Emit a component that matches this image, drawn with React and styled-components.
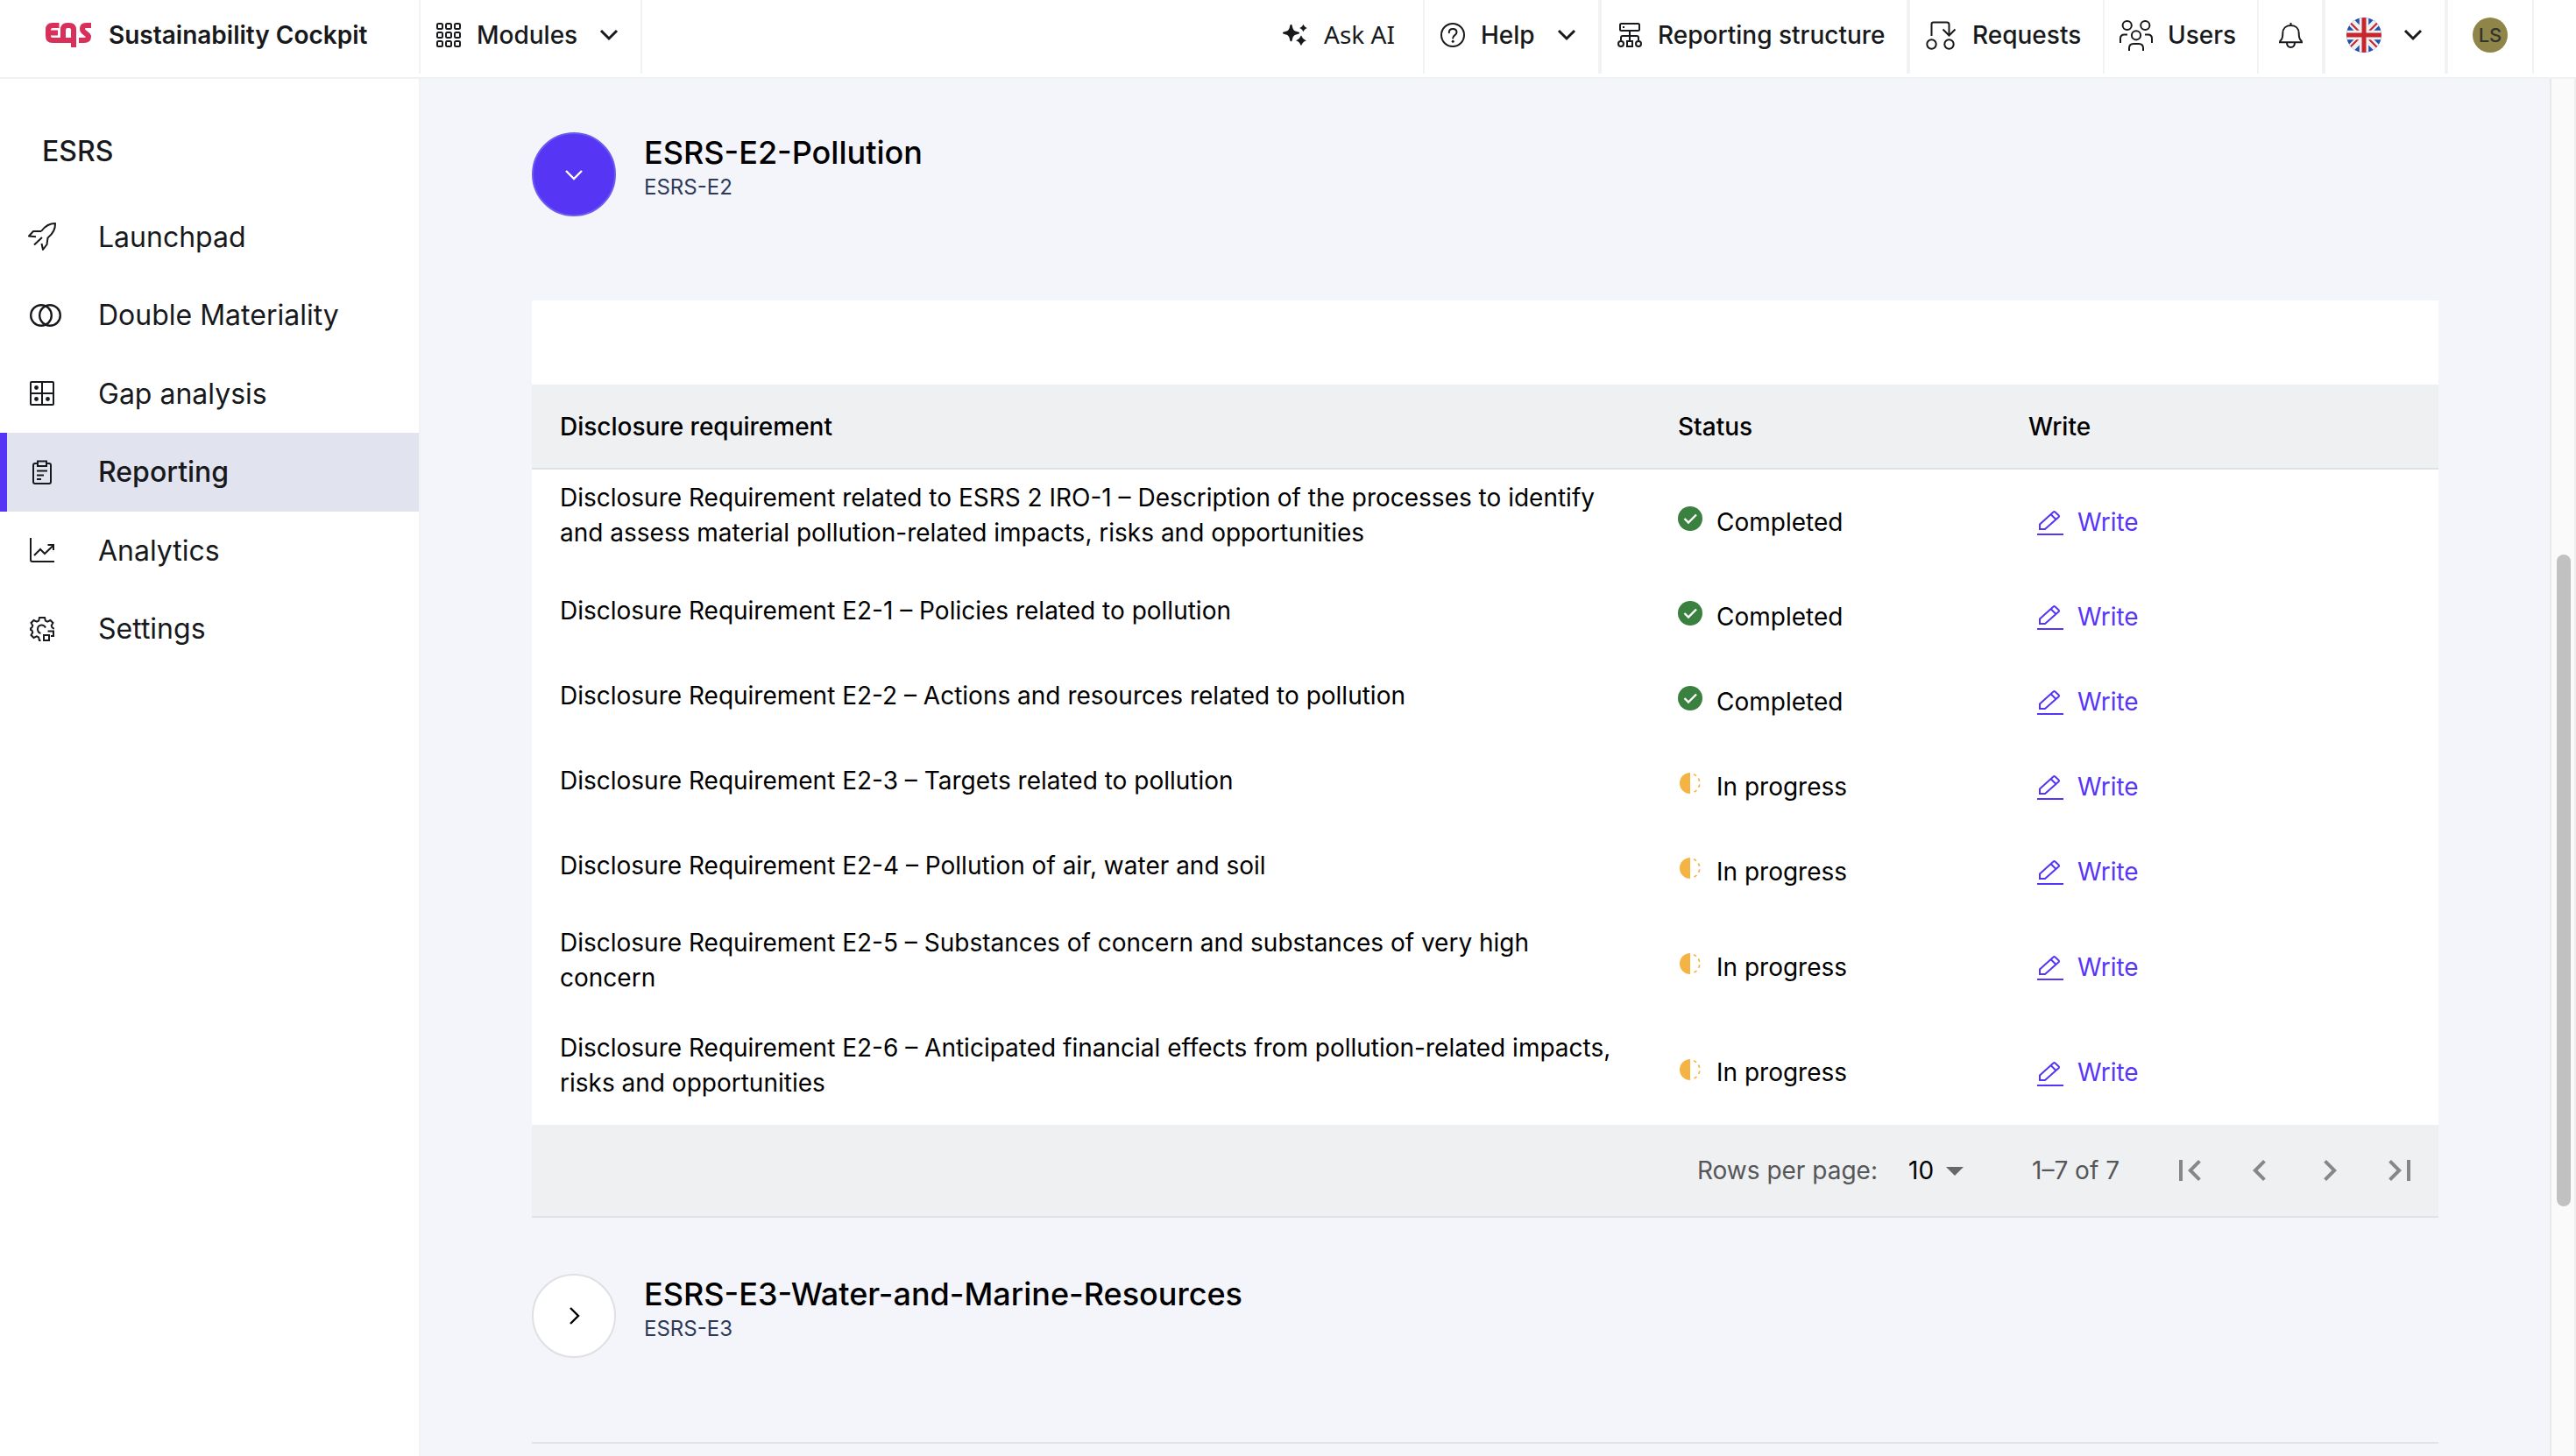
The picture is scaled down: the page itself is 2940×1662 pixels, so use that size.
import React from "react";
import styled, { createGlobalStyle } from "styled-components";

const GlobalStyle = createGlobalStyle`
  * { box-sizing: border-box; }
  html, body { margin: 0; padding: 0; }
  body {
    font-family: Inter, "Liberation Sans", sans-serif;
    font-size: 28px;
    color: #17191c;
    background: #f4f5fb;
    -webkit-font-smoothing: antialiased;
    overflow: hidden;
  }
`;

const Page = styled.div`
  display: flex;
  flex-direction: column;
  width: 2940px;
  height: 1662px;
  overflow: hidden;
`;

const TopBar = styled.header`
  display: flex;
  height: 90px;
  flex: none;
  background: #fff;
  border-bottom: 2px solid #f0f1f3;
`;

const BarCell = styled.div`
  display: flex;
  align-items: center;
  flex: none;
  height: 84px;
  width: ${(p) => p.$w}px;
  padding: 0 ${(p) => p.$pr || 0}px 4px ${(p) => p.$pl}px;
  gap: ${(p) => p.$gap || 18}px;
  border-right: ${(p) => p.$line || 2}px solid #f1f2f4;
`;

const BarSpacer = styled.div`
  flex: ${(p) => (p.$w ? `0 0 ${p.$w}px` : 1)};
`;

const BarLabel = styled.span`
  font-size: 28px;
  font-weight: ${(p) => p.$weight || 500};
  white-space: nowrap;
`;

const AiLabel = styled.span`
  font-family: "Noto Sans", sans-serif;
  font-size: 28px;
  line-height: 40px;
  padding-bottom: 2px;
`;

const ChevronBox = styled.span`
  display: flex;
  margin-left: auto;
`;

const Avatar = styled.div`
  width: 40px;
  height: 40px;
  border-radius: 50%;
  background: #8f8549;
  color: #33332f;
  font-size: 22px;
  font-weight: 500;
  display: flex;
  align-items: center;
  justify-content: center;
`;

const Svg = styled.svg`
  display: block;
  flex: none;
  overflow: visible;
`;

const Body = styled.div`
  display: flex;
  flex: 1;
  min-height: 0;
`;

const Sidebar = styled.nav`
  width: 480px;
  flex: none;
  background: #fff;
  border-right: 2px solid #f1f2f4;
`;

const SidebarTitle = styled.div`
  height: 135.6px;
  padding: 63px 0 0 48px;
  font-size: 32px;
  line-height: 40px;
  font-weight: 500;
`;

const NavItem = styled.a`
  display: flex;
  align-items: center;
  height: 89.5px;
  font-size: 32px;
  font-weight: ${(p) => (p.$active ? 500 : 400)};
  background: ${(p) => (p.$active ? "#e1e3ef" : "transparent")};
  border-left: 8px solid ${(p) => (p.$active ? "#5735f5" : "transparent")};
`;

const NavIcon = styled.span`
  display: flex;
  width: 104px;
  padding-left: ${(p) => p.$pl}px;
`;

const Content = styled.main`
  flex: 1;
  padding: 61px 127px 0;
`;

const SectionHead = styled.div`
  display: flex;
  gap: 32px;
`;

const Toggle = styled.button`
  width: 96px;
  height: 96px;
  padding: 0;
  border-radius: 50%;
  display: flex;
  align-items: center;
  justify-content: center;
  color: ${(p) => (p.$open ? "#fff" : "#000")};
  background: ${(p) => (p.$open ? "#5735f5" : "#fff")};
  border: 2px solid ${(p) => (p.$open ? "#6a5cf0" : "#dfe0e3")};
`;

const SectionTitle = styled.h2`
  margin: 1px 0 0;
  font-size: 36px;
  line-height: 44px;
  font-weight: 500;
  color: #000;
`;

const SectionCode = styled.div`
  margin-top: 1px;
  font-size: 24px;
  line-height: 34px;
  color: #2d3a5a;
`;

const Card = styled.section`
  margin: 96px 0 64px;
  padding-top: 96px;
  background: #fff;
  color: #000;
`;

const gridColumns = "1276px 400px 1fr";

const HeadRow = styled.div`
  display: grid;
  grid-template-columns: ${gridColumns};
  align-items: center;
  height: 97px;
  background: #eff0f2;
  border-bottom: 2px solid #dfe0e2;
  font-weight: 500;
`;

const HeadCell = styled.div`
  padding: 1px 32px 0;
`;

const Row = styled.div`
  display: grid;
  grid-template-columns: ${gridColumns};
  align-items: center;
  height: ${(p) => p.$h}px;
`;

const NameCell = styled.div`
  padding: 0 32px ${(p) => (p.$single ? 14 : 16)}px;
  line-height: 40px;
`;

const StatusCell = styled.div`
  display: flex;
  align-items: center;
  gap: 16px;
  padding-left: 32px;
`;

const StatusIcon = styled.span`
  display: flex;
  padding-bottom: 7px;
`;

const WriteIcon = styled.span`
  display: flex;
  padding-top: 3px;
`;

const WriteLink = styled.a`
  display: flex;
  align-items: center;
  gap: 16px;
  padding-left: 42px;
  color: #5735f5;
`;

const Footer = styled.div`
  display: flex;
  align-items: center;
  justify-content: flex-end;
  height: 106px;
  padding-right: 20px;
  background: #eff0f2;
  border-bottom: 2px solid #e0e1e4;
  color: #555657;
`;

const RowsLabel = styled.span`
  margin-right: 35px;
`;

const RowsSelect = styled.span`
  display: flex;
  align-items: center;
  width: 141px;
  color: #000;
`;

const RangeLabel = styled.span`
  width: 156px;
`;

const PageButton = styled.span`
  display: flex;
  width: 80px;
  color: #868788;

  &:last-child {
    width: 48px;
  }
`;

const Divider = styled.div`
  height: 2px;
  margin-top: 96px;
  background: #e2e3e7;
`;

const ScrollTrack = styled.div`
  width: 30px;
  flex: none;
  padding: 543px 4px 0 6px;
  background: #fafafa;
  border-left: 2px solid #e8e8e8;
  border-right: 2px solid #ededed;
`;

const ScrollThumb = styled.div`
  width: 16px;
  height: 744px;
  border-radius: 8px;
  background: #c1c1c1;
`;

function Icon({ w, h, sw = 2, children, ...rest }) {
  return (
    <Svg
      width={w}
      height={h}
      viewBox={`0 0 ${w} ${h}`}
      fill="none"
      stroke="currentColor"
      strokeWidth={sw}
      {...rest}
    >
      {children}
    </Svg>
  );
}

const Logo = () => (
  <Icon w={53} h={28} sw={6} stroke="#d92f5b">
    <path d="M15.5 3H8Q3 3 3 8v7q0 5 5 5h24M6 11.5h8" />
    <path d="M32 28V8q0-5-5-5h-2q-5 0-5 5v12" />
    <path d="M52 3h-6q-4 0-4 4 0 2.500 3 4.500t4 4q0 4.500-5 4.500h-6" />
  </Icon>
);

const ModulesIcon = () => (
  <Icon w={28} h={28}>
    {[1, 11, 21].map((y) =>
      [1, 11, 21].map((x) => <rect key={`${x}-${y}`} x={x} y={y} width="6" height="6" rx="1.500" />)
    )}
  </Icon>
);

const ChevronDown = () => (
  <Icon w={20} h={12} sw={3}>
    <path d="M1 1l9 9 9-9" />
  </Icon>
);

const SparkleIcon = () => (
  <Icon w={28} h={24} fill="currentColor" stroke="none">
    <path d="M9.500 0c.9 0 1.100.6 1.400 2 .9 4.200 1.800 5.200 6 6.200 1.500.3 2.100.5 2.100 1.400s-.6 1.100-2.100 1.400c-4.200 1-5.100 2-6 6.200-.3 1.400-.5 2-1.400 2s-1.100-.6-1.400-2c-.9-4.200-1.800-5.200-6-6.200C.6 10.700 0 10.500 0 9.600S.6 8.500 2.100 8.200c4.200-1 5.100-2 6-6.200.3-1.400.5-2 1.400-2z" />
    <path d="M23.500 0c.6 0 .7 2.700 4.500 4-3.800 1.300-3.900 4-4.500 4S22.800 5.300 19 4c3.800-1.300 3.900-4 4.500-4z" />
    <path d="M21 12.500c.8 0 .9 4 6 5.700-5.100 1.700-5.200 5.700-6 5.700s-.9-4-6-5.700c5.100-1.700 5.200-5.700 6-5.700z" />
  </Icon>
);

const HelpIcon = () => (
  <Icon w={28} h={28}>
    <circle cx="14" cy="14" r="13" />
    <path d="M9.800 11.200C9.800 8.600 11.600 7 14.200 7s4.300 1.600 4.300 3.900c0 3.300-4.300 3.100-4.300 6.600" strokeLinecap="round" />
    <circle cx="14.200" cy="21.200" r="1.500" fill="currentColor" stroke="none" />
  </Icon>
);

const StructureIcon = () => (
  <Icon w={28} h={28}>
    <rect x="3" y="1" width="22" height="8" rx="1.500" />
    <rect x="6" y="4" width="2" height="2" fill="currentColor" stroke="none" />
    <path d="M14 9v11M4 20v-3q0-2 2-2h16q2 0 2 2v3" />
    <circle cx="4" cy="24" r="3" />
    <circle cx="24" cy="24" r="3" />
    <rect x="11" y="21" width="6" height="6" />
  </Icon>
);

const RequestsIcon = () => (
  <Icon w={34} h={33}>
    <path d="M6.500 17V3.500Q6.500 1.500 8.500 1.500h15.500q2.500 0 2.500 2.500v12.500M19.500 9.500l7 7 7-7" />
    <circle cx="6.500" cy="26.500" r="5.200" />
    <circle cx="26.500" cy="26.500" r="5.200" />
  </Icon>
);

const UsersIcon = () => (
  <Icon w={38} h={35}>
    <circle cx="8.700" cy="6" r="5.100" />
    <circle cx="29.300" cy="6" r="5.100" />
    <circle cx="19" cy="17.300" r="5.100" />
    <path d="M1 26v-5q0-4.500 4.500-4.500H9M37 26v-5q0-4.500-4.500-4.500H29M11 35v-3q0-5 5-5h6q5 0 5 5v3" />
  </Icon>
);

const BellIcon = () => (
  <Icon w={27} h={29}>
    <path d="M13.500 0v3M13.500 3C8 3 4.300 6.500 4.300 12c0 4.500-.5 6.500-2.300 8-.8.7-1 1.200-1 2.200h25c0-1-.2-1.500-1-2.200-1.800-1.500-2.300-3.500-2.300-8 0-5.500-3.700-9-9.200-9zM9 22.500c0 3.500 1.800 5.500 4.500 5.500s4.500-2 4.500-5.500" />
  </Icon>
);

const FlagIcon = () => (
  <Icon w={40} h={40} stroke="none">
    <clipPath id="flagDisc">
      <circle cx="20" cy="20" r="20" />
    </clipPath>
    <g clipPath="url(#flagDisc)">
      <rect width="40" height="40" fill="#1f50b0" />
      <path d="M0 0l40 40M40 0L0 40" stroke="#f0f0f0" strokeWidth="9" />
      <path d="M4 5.500l12 12M24 23l12 12M36 5.500l-12 12M16 22L4 34" stroke="#c8262e" strokeWidth="2.200" />
      <path d="M20 0v40M0 20h40" stroke="#f0f0f0" strokeWidth="10.500" />
      <path d="M20 0v40M0 20h40" stroke="#c8262e" strokeWidth="5" />
    </g>
  </Icon>
);

const RocketIcon = () => (
  <Icon w={32} h={32}>
    <path d="M15 10C19 4.500 24 1 31 1c.3 6.500-2.800 12-8.500 16.500l-1 7.500L17 31l-1.500-7M15 10H6L1 15.500l8 .8M16 17L7 25.500" strokeLinejoin="round" />
  </Icon>
);

const CirclesIcon = () => (
  <Icon w={36} h={26} sw={2.4}>
    <circle cx="13" cy="13" r="11.800" />
    <circle cx="23" cy="13" r="11.800" />
  </Icon>
);

const GapIcon = () => (
  <Icon w={28} h={28}>
    <rect x="1" y="1" width="26" height="26" rx="1" />
    <path d="M14 1v26M1 14h26" />
    <g fill="currentColor" stroke="none">
      <circle cx="7.500" cy="7.500" r="2.400" />
      <circle cx="7.500" cy="20.500" r="2.400" />
      <circle cx="20.500" cy="20.500" r="2.400" />
    </g>
  </Icon>
);

const ClipboardIcon = () => (
  <Icon w={28} h={28}>
    <path d="M9 4H6Q4 4 4 6v19q0 2 2 2h16q2 0 2-2V6q0-2-2-2h-3" />
    <path d="M9 1.500h10v5.500H9zM8 12.500h12M8 17.500h8M8 22h5" />
  </Icon>
);

const ChartIcon = () => (
  <Icon w={28} h={28}>
    <path d="M1 0v25q0 2 2 2h25M5 20l7-7 5 5L27 8.500M20.500 8H27v6" />
  </Icon>
);

const GearIcon = () => (
  <Icon w={28} h={28}>
    <path d="M12.500 27h-1.500l-.9-3.600-2.200-1L4.500 24 1.500 21l1.800-3.200-.9-2.300L1 14.800v-1.600l1.400-.9.9-2.300L1.500 7l3-3L8 5.600l2.200-1L11 1h6l.9 3.600 2.200 1L23.500 4l3 3-1.800 3 .9 2.300 1.400 1v.9M18 12.500C17 10.500 15.500 9.500 13.500 9.500 10.800 9.500 9 11.500 9 14s1.500 4.500 3.500 4.800" />
    <path d="M16 21h6v6h-6zM20.500 16.500H27V22h-3" />
  </Icon>
);

const CheckIcon = () => (
  <Icon w={28} h={28} stroke="none">
    <circle cx="14" cy="14" r="14" fill="#3a803f" />
    <path d="M7.500 14l4.500 4.500 9-9" stroke="#fff" strokeWidth="2.400" />
  </Icon>
);

const ProgressIcon = () => (
  <Icon w={28} h={28} stroke="none">
    <path d="M14 2v24a12 12 0 0 1 0-24z" fill="#f5b344" />
    <path d="M18 3.700a11.200 11.200 0 0 1 0 20.600" stroke="#f5b344" strokeWidth="1.700" strokeDasharray="3.600 3.600" />
  </Icon>
);

const PencilIcon = () => (
  <Icon w={30} h={28}>
    <path d="M0 27h30M3 21v-5.500L18.500 1.500q1-1 2 0L24.500 5.300q1 1 0 2L9 21zM16 4.500l5.500 5.500" />
  </Icon>
);

const GlyphIcon = ({ d }) => (
  <Svg width="48" height="48" viewBox="0 0 24 24" fill="currentColor">
    <path d={d} />
  </Svg>
);

const NAV = [
  ["Launchpad", RocketIcon, 24],
  ["Double Materiality", CirclesIcon, 26],
  ["Gap analysis", GapIcon, 26],
  ["Reporting", ClipboardIcon, 26],
  ["Analytics", ChartIcon, 26],
  ["Settings", GearIcon, 26],
];

const ROWS = [
  ["Disclosure Requirement related to ESRS 2 IRO-1 – Description of the processes to identify and assess material pollution-related impacts, risks and opportunities", true, 119],
  ["Disclosure Requirement E2-1 – Policies related to pollution", true, 97],
  ["Disclosure Requirement E2-2 – Actions and resources related to pollution", true, 97],
  ["Disclosure Requirement E2-3 – Targets related to pollution", false, 97],
  ["Disclosure Requirement E2-4 – Pollution of air, water and soil", false, 97],
  ["Disclosure Requirement E2-5 – Substances of concern and substances of very high concern", false, 121],
  ["Disclosure Requirement E2-6 – Anticipated financial effects from pollution-related impacts, risks and opportunities", false, 120],
];

const PAGER = [
  "M18.41 16.59L13.82 12l4.590-4.590L17 6l-6 6 6 6zM6 6h2v12H6z",
  "M15.41 16.59L10.83 12l4.580-4.590L14 6l-6 6 6 6z",
  "M8.590 16.59L13.170 12 8.590 7.410 10 6l6 6-6 6z",
  "M5.590 7.410L10.180 12l-4.590 4.590L7 18l6-6-6-6zM16 6h2v12h-2z",
];

export default function App() {
  return (
    <>
      <GlobalStyle />
      <Page>
        <TopBar>
          <BarCell $w={480} $pl={52} $gap={19}>
            <Logo />
            <BarLabel $weight={600}>Sustainability Cockpit</BarLabel>
          </BarCell>
          <BarCell $w={253} $pl={18} $pr={26}>
            <ModulesIcon />
            <BarLabel>Modules</BarLabel>
            <ChevronBox><ChevronDown /></ChevronBox>
          </BarCell>
          <BarSpacer />
          <BarCell $w={186} $pl={24} $gap={19}>
            <SparkleIcon />
            <AiLabel>Ask AI</AiLabel>
          </BarCell>
          <BarCell $w={202} $pl={18} $pr={26} $line={4}>
            <HelpIcon />
            <BarLabel>Help</BarLabel>
            <ChevronBox><ChevronDown /></ChevronBox>
          </BarCell>
          <BarCell $w={352} $pl={18} $line={4}>
            <StructureIcon />
            <BarLabel>Reporting structure</BarLabel>
          </BarCell>
          <BarCell $w={222} $pl={18} $gap={19}>
            <RequestsIcon />
            <BarLabel>Requests</BarLabel>
          </BarCell>
          <BarCell $w={176} $pl={17} $gap={17}>
            <UsersIcon />
            <BarLabel>Users</BarLabel>
          </BarCell>
          <BarCell $w={76} $pl={23} $line={4}>
            <BellIcon />
          </BarCell>
          <BarCell $w={140} $pl={24} $pr={26} $line={4}>
            <FlagIcon />
            <ChevronBox><ChevronDown /></ChevronBox>
          </BarCell>
          <BarCell $w={98} $pl={28}>
            <Avatar>LS</Avatar>
          </BarCell>
          <BarSpacer $w={48} />
        </TopBar>
        <Body>
          <Sidebar>
            <SidebarTitle>ESRS</SidebarTitle>
            {NAV.map(([label, Glyph, inset]) => (
              <NavItem key={label} $active={label === "Reporting"}>
                <NavIcon $pl={inset}><Glyph /></NavIcon>
                {label}
              </NavItem>
            ))}
          </Sidebar>
          <Content>
            <SectionHead>
              <Toggle $open>
                <Icon w={20} h={11} sw={2.4}><path d="M1 1l9 9 9-9" /></Icon>
              </Toggle>
              <div>
                <SectionTitle>ESRS-E2-Pollution</SectionTitle>
                <SectionCode>ESRS-E2</SectionCode>
              </div>
            </SectionHead>
            <Card>
              <HeadRow>
                <HeadCell>Disclosure requirement</HeadCell>
                <HeadCell>Status</HeadCell>
                <HeadCell>Write</HeadCell>
              </HeadRow>
              {ROWS.map(([name, done, height]) => (
                <Row key={name} $h={height}>
                  <NameCell $single={height < 100}>{name}</NameCell>
                  <StatusCell>
                    <StatusIcon>{done ? <CheckIcon /> : <ProgressIcon />}</StatusIcon>
                    {done ? "Completed" : "In progress"}
                  </StatusCell>
                  <WriteLink>
                    <WriteIcon><PencilIcon /></WriteIcon>
                    Write
                  </WriteLink>
                </Row>
              ))}
              <Footer>
                <RowsLabel>Rows per page:</RowsLabel>
                <RowsSelect>
                  10
                  <Svg width="48" height="48" viewBox="0 0 24 24" fill="#686868"><path d="M7 10l5 5 5-5z" /></Svg>
                </RowsSelect>
                <RangeLabel>1–7 of 7</RangeLabel>
                {PAGER.map((d) => (
                  <PageButton key={d}><GlyphIcon d={d} /></PageButton>
                ))}
              </Footer>
            </Card>
            <SectionHead>
              <Toggle>
                <Icon w={11} h={20} sw={2.4}><path d="M1 1l9 9-9 9" /></Icon>
              </Toggle>
              <div>
                <SectionTitle>ESRS-E3-Water-and-Marine-Resources</SectionTitle>
                <SectionCode>ESRS-E3</SectionCode>
              </div>
            </SectionHead>
            <Divider />
          </Content>
          <ScrollTrack>
            <ScrollThumb />
          </ScrollTrack>
        </Body>
      </Page>
    </>
  );
}
